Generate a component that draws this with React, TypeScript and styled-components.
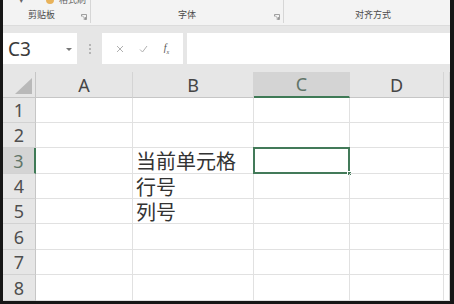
import React from "react";
import styled, { createGlobalStyle } from "styled-components";

const GlobalStyle = createGlobalStyle`
  html, body {
    margin: 0;
    padding: 0;
    background: #161616;
  }
  body {
    font-family: "Noto Sans", "Noto Sans CJK SC", sans-serif;
  }
`;

const Frame = styled.div`
  width: 454px;
  height: 304px;
  box-sizing: border-box;
  padding: 0 4px 3px 3px;
  background: #161616;
  overflow: hidden;
`;

const Window = styled.div`
  height: 301px;
  display: flex;
  flex-direction: column;
  background: #fff;
  overflow: hidden;
`;

/* ---------- ribbon ---------- */

const Ribbon = styled.div`
  height: 26px;
  flex: none;
  display: grid;
  grid-template-columns: 88px 193px 1fr;
  background: #f3f3f3;
  border-bottom: 1px solid #dcdcdc;
  box-sizing: border-box;
  position: relative;
  overflow: hidden;
`;

const RibbonGroup = styled.div<{ $last?: boolean }>`
  position: relative;
  display: flex;
  align-items: flex-end;
  justify-content: center;
  padding-bottom: 3px;
  border-right: ${(p) => (p.$last ? "none" : "1px solid #d6d6d6")};
  margin-bottom: 2px;
`;

const GroupLabel = styled.span<{ $shift?: number }>`
  font-size: 9px;
  line-height: 10px;
  color: #4a4a4a;
  font-family: "Noto Sans CJK SC", sans-serif;
  transform: translateX(${(p) => p.$shift ?? 0}px);
`;

const Launcher = styled.svg`
  position: absolute;
  right: 3px;
  bottom: 3px;
`;

const TopCut = styled.div`
  position: absolute;
  top: -5px;
  left: 16px;
  display: flex;
  align-items: center;
  gap: 5px;
  font-size: 9px;
  line-height: 10px;
  color: #666;
  font-family: "Noto Sans CJK SC", sans-serif;
`;

const Brush = styled.span`
  width: 8px;
  height: 8px;
  border-radius: 50%;
  background: #e8b25a;
  margin-left: 17px;
`;

/* ---------- formula bar ---------- */

const FormulaBar = styled.div`
  flex: none;
  height: 46px;
  box-sizing: border-box;
  padding: 7px 0 8px;
  display: flex;
  align-items: stretch;
  background: #e6e6e6;
`;

const NameBox = styled.div`
  width: 74px;
  background: #fff;
  display: flex;
  align-items: center;
  justify-content: space-between;
  padding: 0 5px 0 5px;
  box-sizing: border-box;
  font-size: 19px;
  color: #3a3a3a;
`;

const Caret = styled.span`
  width: 0;
  height: 0;
  border-left: 3px solid transparent;
  border-right: 3px solid transparent;
  border-top: 3px solid #777;
  margin-top: 1px;
`;

const Dots = styled.div`
  width: 25px;
  display: flex;
  flex-direction: column;
  align-items: center;
  justify-content: center;
  gap: 2px;
  span {
    width: 2px;
    height: 2px;
    background: #b5b5b5;
  }
`;

const FxBox = styled.div`
  width: 81px;
  background: #fff;
  display: flex;
  align-items: center;
  justify-content: space-around;
  padding: 0 6px;
  box-sizing: border-box;
`;

const Fx = styled.span`
  font-family: "Liberation Serif", serif;
  font-style: italic;
  font-size: 10px;
  color: #555;
`;

const FormulaInput = styled.div`
  flex: 1;
  margin-left: 4px;
  background: #fff;
`;

/* ---------- sheet ---------- */

const rowHeights = [25, 25, 26, 25, 25, 26, 25, 26];

const Sheet = styled.div`
  flex: 1;
  display: grid;
  grid-template-columns: 33px 97px 121px 96px 94px 1fr;
  grid-template-rows: 26px ${rowHeights.map((h) => `${h}px`).join(" ")};
  background: #fff;
`;

const Corner = styled.div`
  background: #e6e6e6;
  border-right: 1px solid #c6c6c6;
  border-bottom: 1px solid #c6c6c6;
  box-sizing: border-box;
  display: flex;
  align-items: flex-end;
  justify-content: flex-end;
  padding: 0 3px 3px 0;
`;

const ColHead = styled.div<{ $active?: boolean; $edge?: boolean }>`
  background: ${(p) => (p.$active ? "#d4d4d4" : "#e6e6e6")};
  border-right: 1px solid ${(p) => (p.$edge ? "#cfcfcf" : "#d4d4d4")};
  border-bottom: ${(p) => (p.$active ? "2px solid #3f7a56" : "1px solid #c6c6c6")};
  box-sizing: border-box;
  display: flex;
  align-items: center;
  justify-content: center;
  font-size: 18px;
  color: ${(p) => (p.$active ? "#617568" : "#454545")};
`;

const RowHead = styled.div<{ $active?: boolean }>`
  background: ${(p) => (p.$active ? "#d4d4d4" : "#e6e6e6")};
  border-right: ${(p) => (p.$active ? "2px solid #3f7a56" : "1px solid #c6c6c6")};
  border-bottom: 1px solid #d2d2d2;
  box-sizing: border-box;
  display: flex;
  align-items: center;
  justify-content: center;
  font-size: 18px;
  color: ${(p) => (p.$active ? "#617568" : "#4f4f4f")};
`;

const Cell = styled.div<{ $selected?: boolean; $edge?: boolean }>`
  position: relative;
  border-right: 1px solid ${(p) => (p.$edge ? "#cfcfcf" : "#e1e1e1")};
  border-bottom: 1px solid #e1e1e1;
  box-sizing: border-box;
  display: flex;
  align-items: center;
  padding: 1px 0 0 3px;
  font-family: "Noto Sans CJK SC", sans-serif;
  font-size: 20px;
  line-height: 1;
  color: #333;
  white-space: nowrap;

  ${(p) =>
    p.$selected &&
    `
    &::before {
      content: "";
      position: absolute;
      left: -1px;
      top: -1px;
      right: -1px;
      bottom: -1px;
      border: 2px solid #437a59;
    }
    &::after {
      content: "";
      position: absolute;
      right: -3px;
      bottom: -3px;
      width: 5px;
      height: 5px;
      background: #437a59;
      border: 1px solid #fff;
      box-sizing: border-box;
    }
  `}
`;

const columns = ["A", "B", "C", "D"];
const texts: Record<number, string> = { 3: "当前单元格", 4: "行号", 5: "列号" };

const LauncherIcon = () => (
  <Launcher width="6" height="6" viewBox="0 0 6 6">
    <path d="M0.5 2.5V0.5H5.5V5.5H3.5" fill="none" stroke="#8a8a8a" strokeWidth="0.8" />
    <path d="M1 1.5L4.5 5M4.5 3V5H2.5" fill="none" stroke="#8a8a8a" strokeWidth="0.8" />
  </Launcher>
);

export default function App() {
  return (
    <>
      <GlobalStyle />
      <Frame>
        <Window>
          <Ribbon>
            <TopCut>
              <span>▾</span>
              <Brush />
              <span>格式刷</span>
            </TopCut>
            <RibbonGroup>
              <GroupLabel $shift={-5}>剪贴板</GroupLabel>
              <LauncherIcon />
            </RibbonGroup>
            <RibbonGroup>
              <GroupLabel>字体</GroupLabel>
              <LauncherIcon />
            </RibbonGroup>
            <RibbonGroup $last>
              <GroupLabel $shift={6}>对齐方式</GroupLabel>
            </RibbonGroup>
          </Ribbon>

          <FormulaBar>
            <NameBox>
              <span>C3</span>
              <Caret />
            </NameBox>
            <Dots>
              <span />
              <span />
              <span />
            </Dots>
            <FxBox>
              <svg width="8" height="8" viewBox="0 0 8 8">
                <path d="M1 1L7 7M7 1L1 7" stroke="#b0b0b0" strokeWidth="1" />
              </svg>
              <svg width="9" height="8" viewBox="0 0 9 8">
                <path d="M1 4.5L3.5 7L8 1" fill="none" stroke="#b0b0b0" strokeWidth="1" />
              </svg>
              <Fx>
                f<sub style={{ fontSize: 6 }}>x</sub>
              </Fx>
            </FxBox>
            <FormulaInput />
          </FormulaBar>

          <Sheet>
            <Corner>
              <svg width="17" height="16" viewBox="0 0 17 16">
                <path d="M17 0V16H0Z" fill="#b9b9b9" />
              </svg>
            </Corner>
            {columns.map((c) => (
              <ColHead key={c} $active={c === "C"}>
                {c}
              </ColHead>
            ))}
            <ColHead $edge />
            {rowHeights.map((_, i) => {
              const r = i + 1;
              return (
                <React.Fragment key={r}>
                  <RowHead $active={r === 3}>{r}</RowHead>
                  {columns.map((c) => (
                    <Cell key={c} $selected={r === 3 && c === "C"}>
                      {c === "B" ? texts[r] : null}
                    </Cell>
                  ))}
                  <Cell $edge />
                </React.Fragment>
              );
            })}
          </Sheet>
        </Window>
      </Frame>
    </>
  );
}
